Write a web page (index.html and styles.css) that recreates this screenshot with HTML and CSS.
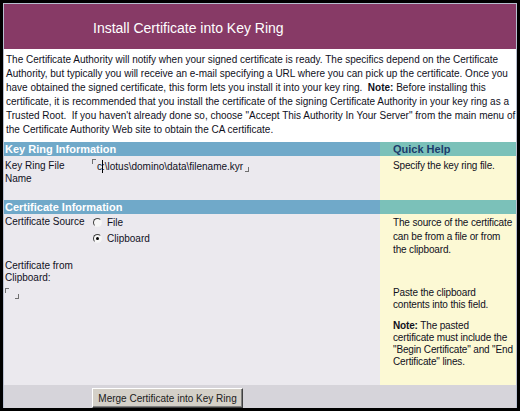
FILE: index.html
```html
<!DOCTYPE html>
<html lang="en">
<head>
  <meta charset="UTF-8" />
  <title>Install Certificate into Key Ring</title>
  <link rel="stylesheet" href="styles.css">
</head>
<body>
  <div class="window">
    <div class="banner">Install Certificate into Key Ring</div>

    <p class="intro">The Certificate Authority will notify when your signed certificate is ready. The specifics depend on the Certificate<br>
      Authority, but typically you will receive an e-mail specifying a URL where you can pick up the certificate. Once you<br>
      have obtained the signed certificate, this form lets you install it into your key ring. &nbsp;<b>Note:</b> Before installing this<br>
      certificate, it is recommended that you install the certificate of the signing Certificate Authority in your key ring as a<br>
      Trusted Root. &nbsp;If you haven't already done so, choose "Accept This Authority In Your Server" from the main menu of<br>
      the Certificate Authority Web site to obtain the CA certificate.</p>

    <div class="form">
      <div class="bar">Key Ring Information</div>
      <div class="bar help-bar">Quick Help</div>

      <div class="cell">
        <div class="label">Key Ring File<br>Name</div>
        <div class="field"><span class="mark open"></span>c<span class="caret"></span>:\lotus\domino\data\filename.kyr<span class="mark close"></span></div>
      </div>
      <div class="help">Specify the key ring file.</div>

      <div class="bar">Certificate Information</div>
      <div class="bar help-bar"></div>

      <div class="cell source">
        <div class="label">Certificate Source</div>
        <div class="options">
          <label><input type="radio" name="source"> File</label>
          <label><input type="radio" name="source" checked> Clipboard</label>
        </div>
      </div>
      <div class="help source-help">The source of the certificate<br>can be from a file or from<br>the clipboard.</div>

      <div class="cell paste">
        <div>Certificate from<br>Clipboard:</div>
        <div class="paste-field"><span class="mark open"></span><span class="mark close"></span></div>
      </div>
      <div class="help paste-help">
        <p>Paste the clipboard<br>contents into this field.</p>
        <p><b>Note:</b> The pasted<br>certificate must include the<br>"Begin Certificate" and "End<br>Certificate" lines.</p>
      </div>
    </div>

    <div class="actions">
      <button>Merge Certificate into Key Ring</button>
    </div>
  </div>
</body>
</html>
```

FILE: styles.css
```css
body {
  margin: 0;
  background: #000;
  font-family: "Liberation Sans", Arial, sans-serif;
  font-size: 10px;
  color: #10101c;
}
.window {
  width: 520px;
  height: 411px;
  box-sizing: border-box;
  border: 3px solid #000;
  padding: 1px 1px 0;
  background: #b8bfd0;
  display: flex;
  flex-direction: column;
}

/* title */
.banner {
  height: 45px;
  box-sizing: border-box;
  padding: 3px 0 0 89px;
  display: flex;
  align-items: center;
  background: #873a66;
  color: #fff;
  font-size: 14px;
}
.intro {
  margin: 0;
  height: 93px;
  box-sizing: border-box;
  padding: 4px 0 0 2px;
  background: #fff;
  line-height: 14px;
  white-space: nowrap;
  overflow: hidden;
}

/* form table */
.form {
  display: grid;
  grid-template-columns: 376px 136px;
  grid-template-rows: 14px 44px 14px 44px 127px;
}
.bar {
  background: #70a9c9;
  color: #fff;
  font-weight: bold;
  font-size: 11px;
  line-height: 14px;
  padding-left: 1px;
}
.help-bar {
  background: #7bc1b9;
  color: #1b3c6c;
  padding-left: 13px;
}
.cell {
  display: flex;
  background: #ebe9ee;
  padding: 3px 0 0 1px;
  line-height: 13px;
}
.label {
  width: 87px;
  flex: none;
}
.help {
  background: #fcf9d4;
  padding: 3px 0 0 13px;
  line-height: 13px;
  letter-spacing: -0.15px;
  white-space: nowrap;
  overflow: hidden;
}

/* notes field markers */
.mark {
  display: inline-block;
  width: 3px;
  height: 4px;
  border: 0 solid #707070;
}
.mark.open {
  border-left-width: 1px;
  border-top-width: 1px;
  vertical-align: 6px;
  margin-right: 1px;
}
.mark.close {
  border-right-width: 1px;
  border-bottom-width: 1px;
  vertical-align: -2px;
  margin-left: 2px;
}
.caret {
  display: inline-block;
  width: 1px;
  height: 13px;
  margin: 0 -1px 0 0;
  background: #000;
  vertical-align: -3px;
}

/* certificate source */
.source {
  padding-top: 1px;
}
.options label {
  display: flex;
  align-items: center;
  height: 15.5px;
  gap: 5px;
}
.options input {
  appearance: none;
  margin: 0 0 0 1px;
  width: 9px;
  height: 9px;
  box-sizing: border-box;
  border: 1px solid;
  border-color: #404040 #f4f4f4 #f4f4f4 #404040;
  border-radius: 50%;
  background: #f7f7f7;
  display: grid;
  place-content: center;
}
.options input:checked::after {
  content: "";
  width: 3px;
  height: 3px;
  border-radius: 50%;
  background: #000;
}
.source-help {
  padding-top: 2px;
  line-height: 13.5px;
}

/* paste */
.paste {
  flex-direction: column;
  padding-top: 2px;
  line-height: 12px;
}
.paste-field {
  margin-top: 4px;
}
.paste-field .mark.open {
  vertical-align: 4px;
  margin-right: 4px;
}
.paste-help {
  padding-top: 29px;
  line-height: 12px;
}
.paste-help p {
  margin: 0 0 9px;
}

/* bottom */
.actions {
  height: 23px;
  box-sizing: border-box;
  padding: 3px 0 0 88px;
  background: #d6d4da;
}
.actions button {
  width: 151px;
  height: 20px;
  padding: 0;
  font-family: inherit;
  font-size: 10px;
  color: #202020;
  background: #d4d0c8;
  border: 1px solid;
  border-color: #fff #404040 #404040 #fff;
  box-shadow: inset -1px -1px #808080;
}
```
